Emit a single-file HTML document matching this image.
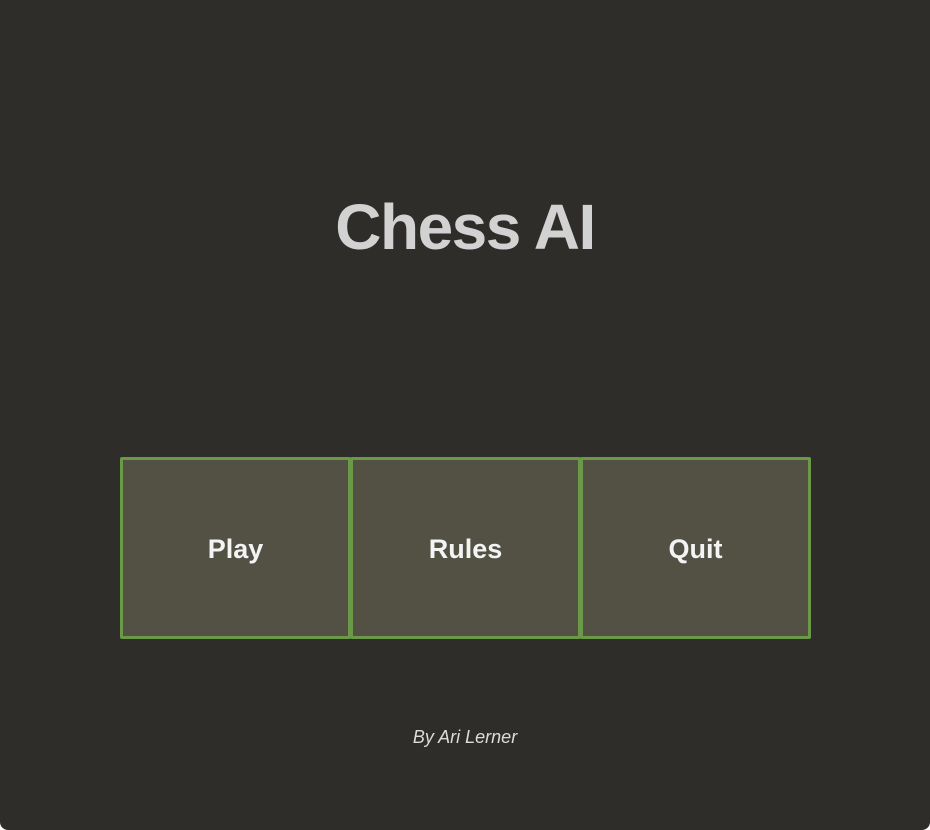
<!DOCTYPE html>
<html><head><style>
html,body{margin:0;padding:0;background:#fff;}
.page{position:relative;width:930px;height:830px;background:#2f2d29;border-radius:0 0 8px 8px;overflow:hidden;font-family:"Liberation Sans",sans-serif;}
h1{position:absolute;top:187px;left:0;width:930px;text-align:center;margin:0;font-size:64px;letter-spacing:-1.5px;font-weight:bold;color:#d2d2d2;line-height:80px;}
.btn{position:absolute;top:457px;height:176px;width:225px;background:#525144;border:3px solid #6a9a48;border-radius:2px;color:#f4f4f4;font-weight:bold;font-size:27px;display:flex;align-items:center;justify-content:center;box-sizing:content-box;padding-top:2px;height:174px;}
.foot{position:absolute;top:727px;left:0;width:930px;text-align:center;font-style:italic;font-size:18px;color:#dcdcdc;}
</style></head><body>
<div class="page">
<h1>Chess AI</h1>
<div class="btn" style="left:120px">Play</div>
<div class="btn" style="left:350px">Rules</div>
<div class="btn" style="left:580px">Quit</div>
<div class="foot">By Ari Lerner</div>
</div>
</body></html>
